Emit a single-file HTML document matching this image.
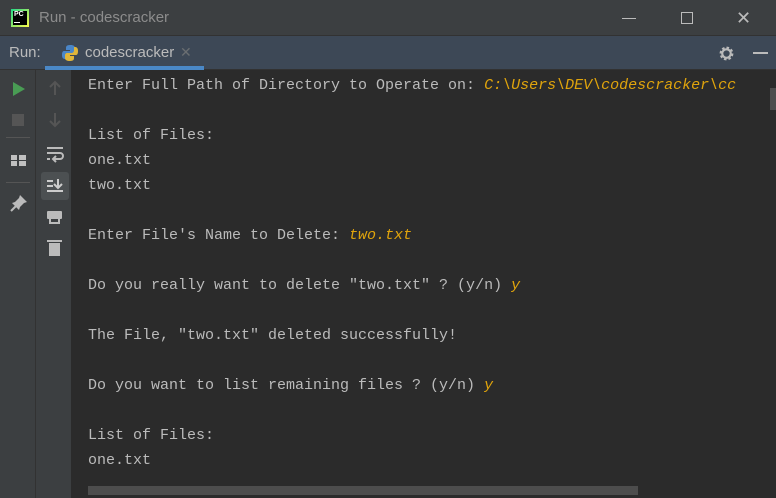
<!DOCTYPE html>
<html><head><style>
*{margin:0;padding:0;box-sizing:border-box}
body{width:776px;height:498px;background:#2b2b2b;position:relative;overflow:hidden;font-family:"Liberation Sans",sans-serif}
.title{position:absolute;left:0;top:0;width:776px;height:36px;background:#3c3f41;border-bottom:1px solid #323232}
.tabbar{position:absolute;left:0;top:36px;width:776px;height:34px;background:#3d4856;border-bottom:1px solid #323232}
.tb1{position:absolute;left:0;top:70px;width:36px;height:428px;background:#3c3f41;border-right:1px solid #323232}
.tb2{position:absolute;left:36px;top:70px;width:36px;height:428px;background:#3c3f41;border-right:1px solid #2b2b2b}
.con{position:absolute;left:88px;top:73px;font-family:"Liberation Mono",monospace;font-size:15px;line-height:25px;color:#bbbbbb;white-space:pre}
.y{color:#e0a40c;font-style:italic}
</style></head><body>
<div class="title">
<div style="position:absolute;left:11px;top:9px;width:18px;height:18px;background:linear-gradient(135deg,#21d789,#fcf84a);padding:2px"><div style="width:14px;height:14px;background:#000;color:#fff;font-size:7px;font-weight:bold;line-height:8px;padding-left:1px">PC<div style="width:6px;height:1px;background:#fff;margin-top:3px"></div></div></div>
<div style="position:absolute;left:39px;top:9px;color:#8c8c8c;font-size:15px">Run - codescracker</div>
<div style="position:absolute;left:622px;top:18px;width:14px;height:1px;background:#bbb"></div>
<div style="position:absolute;left:681px;top:12px;width:12px;height:12px;border:1px solid #bbb"></div>
<div style="position:absolute;left:736px;top:8px;color:#bbb;font-size:18px">✕</div>
</div>
<div class="tabbar">
<div style="position:absolute;left:9px;top:8px;color:#bbb;font-size:15px">Run:</div>
<svg style="position:absolute;left:61px;top:8px" width="18" height="18" viewBox="0 0 18 18"><path d="M9 1C5 1 5 3 5 4v2h4v1H3C1 7 1 10 1 11s0 4 3 4h1v-3c0-2 1-3 3-3h4c1 0 2-1 2-2V4c0-2-2-3-4-3z" fill="#4a86c8"/><path d="M9 17c4 0 4-2 4-3v-2H9v-1h6c2 0 2-3 2-4s0-4-3-4h-1v3c0 2-1 3-3 3H6c-1 0-2 1-2 2v3c0 2 2 3 5 3z" fill="#e0b63a"/></svg>
<div style="position:absolute;left:85px;top:8px;color:#bbb;font-size:15px">codescracker</div>
<div style="position:absolute;left:180px;top:8px;color:#6a6e71;font-size:14px">✕</div>
<div style="position:absolute;left:45px;top:30px;width:159px;height:4px;background:#4a88c7"></div>
<svg style="position:absolute;left:718px;top:9px" width="17" height="17" viewBox="0 0 16 16"><circle cx="8" cy="8" r="5" fill="none" stroke="#bbb" stroke-width="3" stroke-dasharray="2.2 1.7"/><circle cx="8" cy="8" r="4" fill="none" stroke="#bbb" stroke-width="2"/></svg>
<div style="position:absolute;left:753px;top:16px;width:15px;height:2px;background:#bbb"></div>
</div>
<div class="tb1">
<svg style="position:absolute;left:12px;top:12px" width="14" height="14"><path d="M1 0L13 7L1 14Z" fill="#499c54"/></svg>
<div style="position:absolute;left:12px;top:44px;width:12px;height:12px;background:#555"></div>
<div style="position:absolute;left:6px;top:67px;width:24px;height:1px;background:#555"></div>
<div style="position:absolute;left:11px;top:85px;width:15px;height:11px;background:#c0c0c0;border-top:5px solid #c0c0c0"><div style="position:absolute;left:6px;top:-5px;width:2px;height:11px;background:#3c3f41"></div><div style="position:absolute;left:0;top:0;width:15px;height:1px;background:#3c3f41"></div></div>
<div style="position:absolute;left:6px;top:112px;width:24px;height:1px;background:#555"></div>
<svg style="position:absolute;left:9px;top:123px" width="20" height="20" viewBox="0 0 20 20"><path d="M11 2L18 9L15 10L11 14L10 17L3 10L6 9L10 5Z" fill="#bbb"/><path d="M7 13L2 18" stroke="#bbb" stroke-width="2"/></svg>
</div>
<div class="tb2">
<svg style="position:absolute;left:11px;top:10px" width="16" height="16"><path d="M8 15V2M3 7L8 2L13 7" stroke="#555" stroke-width="2" fill="none"/></svg>
<svg style="position:absolute;left:11px;top:42px" width="16" height="16"><path d="M8 1V14M3 9L8 14L13 9" stroke="#555" stroke-width="2" fill="none"/></svg>
<svg style="position:absolute;left:10px;top:75px" width="18" height="18"><path d="M1 3H17M1 8H14a3 3 0 0 1 0 6H8M1 14H4" stroke="#bbb" stroke-width="2" fill="none"/><path d="M10 11L7 14L10 17" stroke="#bbb" stroke-width="2" fill="none"/></svg>
<div style="position:absolute;left:5px;top:102px;width:28px;height:28px;background:#4c5052;border-radius:3px"></div>
<svg style="position:absolute;left:10px;top:107px" width="18" height="18"><path d="M1 4H7M1 9H7M1 14H17M12 2V11M8 7L12 11L16 7" stroke="#ccc" stroke-width="2" fill="none"/></svg>
<div style="position:absolute;left:11px;top:141px;width:15px;height:8px;background:#bbb;border-radius:1px"></div>
<div style="position:absolute;left:13px;top:148px;width:11px;height:6px;border:2px solid #bbb;border-top:none"></div>
<div style="position:absolute;left:13px;top:173px;width:11px;height:13px;background:#bbb"></div>
<div style="position:absolute;left:11px;top:170px;width:15px;height:2px;background:#bbb"></div>
</div>
<div class="con">Enter Full Path of Directory to Operate on: <span class="y">C:\Users\DEV\codescracker\cc</span>

List of Files:
one.txt
two.txt

Enter File's Name to Delete: <span class="y">two.txt</span>

Do you really want to delete "two.txt" ? (y/n) <span class="y">y</span>

The File, "two.txt" deleted successfully!

Do you want to list remaining files ? (y/n) <span class="y">y</span>

List of Files:
one.txt</div>
<div style="position:absolute;left:88px;top:486px;width:550px;height:9px;background:#4d4d4d"></div>
<div style="position:absolute;left:770px;top:88px;width:6px;height:22px;background:#4d4d4d"></div>
</body></html>
